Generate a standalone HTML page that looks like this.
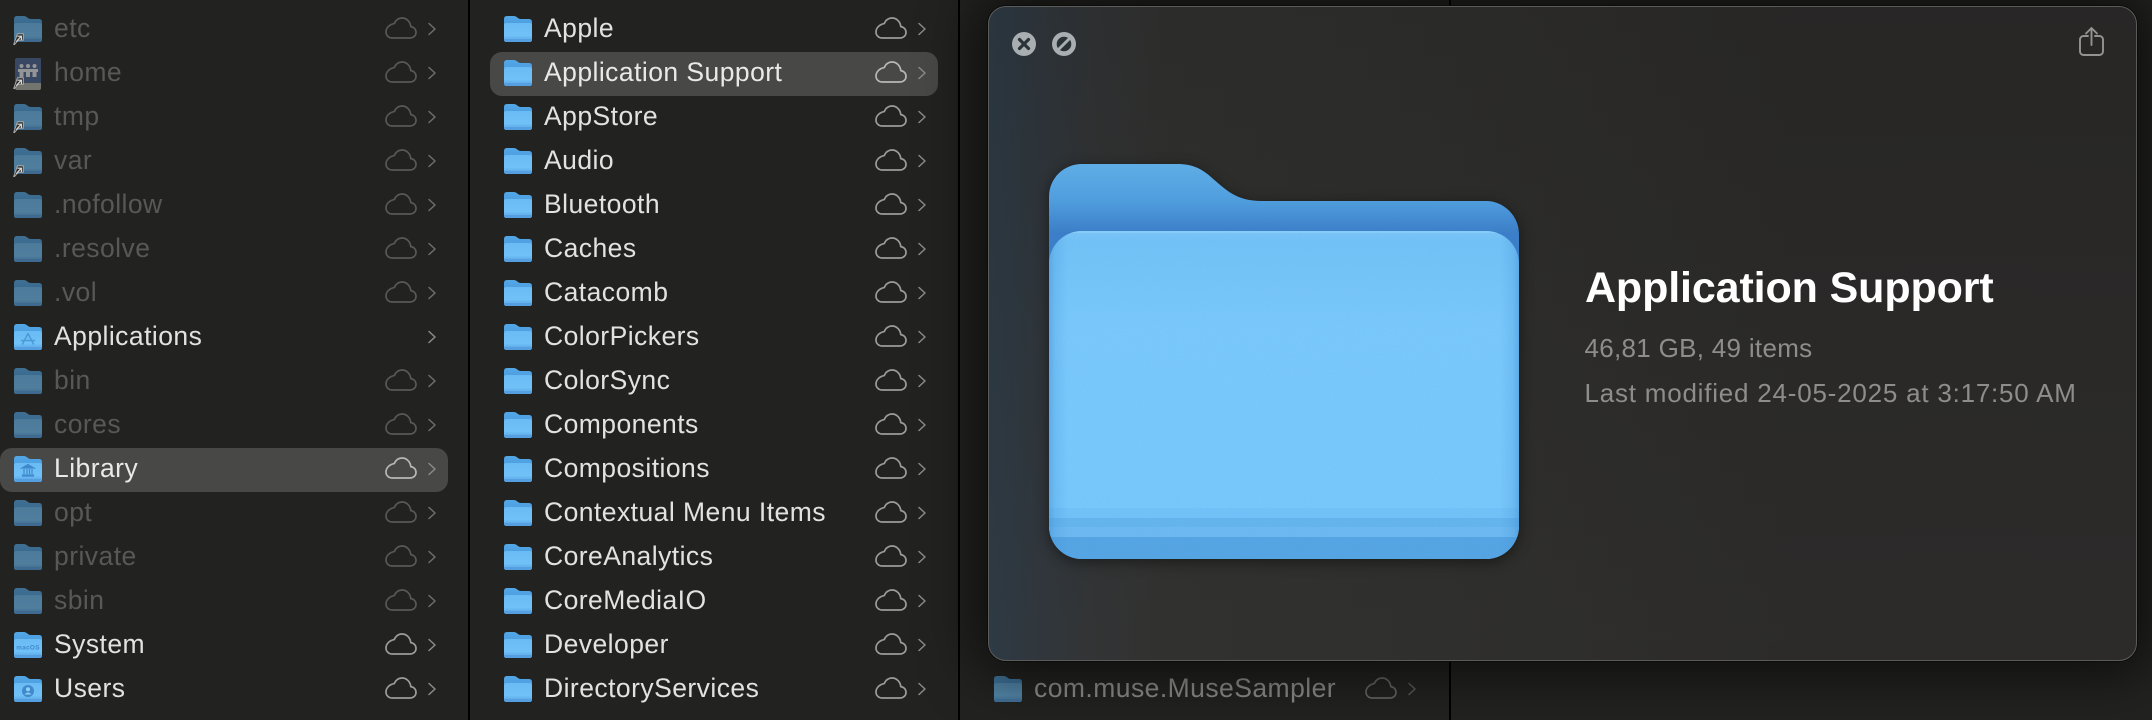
<!DOCTYPE html>
<html><head><meta charset="utf-8"><title>Finder</title>
<style>
html,body{margin:0;padding:0;background:#222220;width:2152px;height:720px;overflow:hidden}
body{position:relative;font-family:"Liberation Sans",sans-serif}
.d{position:absolute;top:0;width:2px;height:720px;background:#000}
.c{position:absolute;top:0;width:448px;height:720px}
.r{position:absolute;left:0;width:448px;height:44px;font-size:26.5px;line-height:44px;letter-spacing:.45px;color:#e2e2e1;white-space:nowrap}
.r.h{background:#484847;border-radius:12px;color:#e9e9e8}
.r span{position:absolute;left:54px;top:-1.9px}
.r svg{position:absolute;overflow:visible}
.r .i{left:14px;top:8px}
.r .cl{left:385px;top:9px;color:#9c9c9b}
.r .ch{left:428px;top:14px;color:#8a8a89}
.r.h .cl{color:#b8b8b7}
.r.x{color:#585857}
.r.x .i{opacity:.58}
.r.x .cl{color:#585857}
.r.x .ch{color:#6e6e6d}
.r.m{color:#8a8a89}
.r.m .i{opacity:.62}
.r.m .cl{color:#636362}
.r.m .ch{color:#5a5a59}
#p{position:absolute;left:988px;top:6px;width:1149px;height:655px;box-sizing:border-box;border:1.5px solid #5c5c5b;border-radius:18px;background:linear-gradient(180deg,rgba(0,0,0,.04),rgba(255,255,255,.015)),linear-gradient(90deg,#2b3741 0,#2d343a 4%,#2f3132 9%,#2e2e2c 16%,#2c2c2a 40%,#292827 70%);box-shadow:0 0 0 1px #0c0c0c,0 0 55px 12px rgba(0,0,0,.62)}
.t{position:absolute;white-space:nowrap}
</style></head><body>
<svg width="0" height="0" style="position:absolute">
<defs>
<linearGradient id="b" x1="0" y1="0" x2="0" y2="1"><stop offset="0" stop-color="#54a8e6"/><stop offset="1" stop-color="#3f8bd4"/></linearGradient>
<linearGradient id="fr" x1="0" y1="0" x2="0" y2="1"><stop offset="0" stop-color="#6abbf4"/><stop offset="1" stop-color="#74c4fa"/></linearGradient>
<linearGradient id="bb" gradientUnits="userSpaceOnUse" x1="0" y1="0" x2="0" y2="68"><stop offset="0" stop-color="#5fade6"/><stop offset=".55" stop-color="#4f9ddd"/><stop offset="1" stop-color="#3c7fc8"/></linearGradient>
<linearGradient id="ff" x1="0" y1="0" x2="0" y2="1"><stop offset="0" stop-color="#7cc6f8"/><stop offset=".03" stop-color="#72c2f7"/><stop offset=".3" stop-color="#7ac9fc"/><stop offset="1" stop-color="#78c8fc"/></linearGradient>
<linearGradient id="se" x1="0" y1="0" x2="1" y2="0"><stop offset="0" stop-color="#3f8fd6" stop-opacity=".5"/><stop offset=".012" stop-color="#3f8fd6" stop-opacity=".22"/><stop offset=".04" stop-color="#3f8fd6" stop-opacity="0"/><stop offset=".96" stop-color="#3f8fd6" stop-opacity="0"/><stop offset=".988" stop-color="#3f8fd6" stop-opacity=".22"/><stop offset="1" stop-color="#3f8fd6" stop-opacity=".5"/></linearGradient>
<clipPath id="fc"><rect x="0" y="67" width="470" height="328" rx="33"/></clipPath>
<filter id="n" x="0" y="0" width="100%" height="100%"><feTurbulence type="fractalNoise" baseFrequency=".7" numOctaves="2" seed="4"/><feColorMatrix values="0 0 0 0 .15 0 0 0 0 .35 0 0 0 0 .6 .6 0 0 0 -.18"/></filter>
<symbol id="f" viewBox="0 0 28 26" width="28" height="26">
<path d="M0 3Q0 0 3 0H9.500Q11.500 0 13 1.200L14.500 2.400Q15.500 3 17 3H25Q28 3 28 6V23Q28 26 25 26H3Q0 26 0 23Z" fill="url(#b)"/>
<path d="M0 9.500Q0 7 2.500 7H25.500Q28 7 28 9.500V23.500Q28 26 25.500 26H2.500Q0 26 0 23.500Z" fill="url(#fr)"/>
<path d="M0 20.500H28V22H0Z" fill="#66b6f0"/><path d="M0 22.500H28V23.500Q28 26 25.500 26H2.500Q0 26 0 23.500Z" fill="#559fe0"/>
</symbol>
<symbol id="cl" viewBox="0 0 32 22" width="32" height="22" overflow="visible">
<path d="M7.500 21H24.800C28.600 21 31 18.600 31 15.400C31 12.200 28.800 10 25.800 9.600C25.200 4.600 21.600 1 17 1C13.400 1 10.800 3 9.200 6.600C4.800 7.400 1 10.600 1 15C1 18.600 3.800 21 7.500 21Z" fill="none" stroke="currentColor" stroke-width="1.700" stroke-linejoin="round"/>
</symbol>
<symbol id="ch" viewBox="0 0 8 14" width="8" height="14" overflow="visible">
<path d="M1 1.500L7 7L1 12.500" fill="none" stroke="currentColor" stroke-width="1.500" stroke-linecap="round" stroke-linejoin="round"/>
</symbol>
<symbol id="ln" viewBox="0 0 11 12" width="11" height="12" overflow="visible">
<path d="M4.500 .8H10.300V7.200H5.200L1.500 11.500H.7Z" fill="#2c2c2b" stroke="#a8a8a7" stroke-width="1" stroke-linejoin="round"/>
<path d="M3.300 8.600L7.800 3.700M4.400 3.200H8.400V7" fill="none" stroke="#d8d8d7" stroke-width="1.200"/>
</symbol>
</defs>
</svg>

<div class="d" style="left:468px"></div>
<div class="d" style="left:958px"></div>
<div class="d" style="left:1449px"></div>

<div class="c" style="left:0">
<div class="r x" style="top:8px"><svg class="i" width="28" height="26"><use href="#f"/></svg><svg class="i" style="left:13px;top:25px;opacity:1" width="11" height="12"><use href="#ln"/></svg><span>etc</span><svg class="cl" width="32" height="22"><use href="#cl"/></svg><svg class="ch" width="8" height="14"><use href="#ch"/></svg></div>
<div class="r x" style="top:52px"><svg class="i" width="28" height="32" style="top:6px"><path d="M3 0H26Q27 0 27 1V26H1V2Q1 0 3 0Z" fill="#4a6493"/><path d="M1 25H27V30Q27 32 25 32H3Q1 32 1 30Z" fill="#b0b0a8"/><g fill="#e4e6ea"><circle cx="7.500" cy="8" r="2"/><circle cx="14" cy="8" r="2"/><circle cx="20.500" cy="8" r="2"/><path d="M4 11H24V14H22.500V19H18.500V14H16V19H12V14H9.500V19H5.500V14H4Z"/></g></svg><svg class="i" style="left:13px;top:25px;opacity:1" width="11" height="12"><use href="#ln"/></svg><span>home</span><svg class="cl" width="32" height="22"><use href="#cl"/></svg><svg class="ch" width="8" height="14"><use href="#ch"/></svg></div>
<div class="r x" style="top:96px"><svg class="i" width="28" height="26"><use href="#f"/></svg><svg class="i" style="left:13px;top:25px;opacity:1" width="11" height="12"><use href="#ln"/></svg><span>tmp</span><svg class="cl" width="32" height="22"><use href="#cl"/></svg><svg class="ch" width="8" height="14"><use href="#ch"/></svg></div>
<div class="r x" style="top:140px"><svg class="i" width="28" height="26"><use href="#f"/></svg><svg class="i" style="left:13px;top:25px;opacity:1" width="11" height="12"><use href="#ln"/></svg><span>var</span><svg class="cl" width="32" height="22"><use href="#cl"/></svg><svg class="ch" width="8" height="14"><use href="#ch"/></svg></div>
<div class="r x" style="top:184px"><svg class="i" width="28" height="26"><use href="#f"/></svg><span>.nofollow</span><svg class="cl" width="32" height="22"><use href="#cl"/></svg><svg class="ch" width="8" height="14"><use href="#ch"/></svg></div>
<div class="r x" style="top:228px"><svg class="i" width="28" height="26"><use href="#f"/></svg><span>.resolve</span><svg class="cl" width="32" height="22"><use href="#cl"/></svg><svg class="ch" width="8" height="14"><use href="#ch"/></svg></div>
<div class="r x" style="top:272px"><svg class="i" width="28" height="26"><use href="#f"/></svg><span>.vol</span><svg class="cl" width="32" height="22"><use href="#cl"/></svg><svg class="ch" width="8" height="14"><use href="#ch"/></svg></div>
<div class="r" style="top:316px"><svg class="i" width="28" height="26"><use href="#f"/><path d="M14 9.500L8.500 20M14 9.500L19.500 20M7.500 16.500H20.500" fill="none" stroke="#4b9ad9" stroke-width="1.500" stroke-linecap="round"/></svg><span>Applications</span><svg class="ch" width="8" height="14"><use href="#ch"/></svg></div>
<div class="r x" style="top:360px"><svg class="i" width="28" height="26"><use href="#f"/></svg><span>bin</span><svg class="cl" width="32" height="22"><use href="#cl"/></svg><svg class="ch" width="8" height="14"><use href="#ch"/></svg></div>
<div class="r x" style="top:404px"><svg class="i" width="28" height="26"><use href="#f"/></svg><span>cores</span><svg class="cl" width="32" height="22"><use href="#cl"/></svg><svg class="ch" width="8" height="14"><use href="#ch"/></svg></div>
<div class="r h" style="top:448px"><svg class="i" width="28" height="26"><use href="#f"/><path d="M14 8.500L20 12H8ZM8.500 19H19.500V20H8.500ZM10 13V18M13 13V18M15.500 13V18M18 13V18" fill="#4089cd" stroke="#4089cd" stroke-width="1.200"/></svg><span>Library</span><svg class="cl" width="32" height="22"><use href="#cl"/></svg><svg class="ch" width="8" height="14"><use href="#ch"/></svg></div>
<div class="r x" style="top:492px"><svg class="i" width="28" height="26"><use href="#f"/></svg><span>opt</span><svg class="cl" width="32" height="22"><use href="#cl"/></svg><svg class="ch" width="8" height="14"><use href="#ch"/></svg></div>
<div class="r x" style="top:536px"><svg class="i" width="28" height="26"><use href="#f"/></svg><span>private</span><svg class="cl" width="32" height="22"><use href="#cl"/></svg><svg class="ch" width="8" height="14"><use href="#ch"/></svg></div>
<div class="r x" style="top:580px"><svg class="i" width="28" height="26"><use href="#f"/></svg><span>sbin</span><svg class="cl" width="32" height="22"><use href="#cl"/></svg><svg class="ch" width="8" height="14"><use href="#ch"/></svg></div>
<div class="r" style="top:624px"><svg class="i" width="28" height="26"><use href="#f"/><text x="14" y="17.500" font-size="6.400" font-weight="700" text-anchor="middle" fill="#4089cd" font-family="Liberation Sans" letter-spacing=".3">macOS</text></svg><span>System</span><svg class="cl" width="32" height="22"><use href="#cl"/></svg><svg class="ch" width="8" height="14"><use href="#ch"/></svg></div>
<div class="r" style="top:668px"><svg class="i" width="28" height="26"><use href="#f"/><circle cx="14" cy="15" r="6" fill="#4089cd"/><circle cx="14" cy="13.300" r="2" fill="#8fd0f8"/><path d="M10.500 18.500Q14 14.500 17.500 18.500Z" fill="#8fd0f8"/></svg><span>Users</span><svg class="cl" width="32" height="22"><use href="#cl"/></svg><svg class="ch" width="8" height="14"><use href="#ch"/></svg></div>
</div>

<div class="c" style="left:490px">
<div class="r" style="top:8px"><svg class="i" width="28" height="26"><use href="#f"/></svg><span>Apple</span><svg class="cl" width="32" height="22"><use href="#cl"/></svg><svg class="ch" width="8" height="14"><use href="#ch"/></svg></div>
<div class="r h" style="top:52px"><svg class="i" width="28" height="26"><use href="#f"/></svg><span>Application Support</span><svg class="cl" width="32" height="22"><use href="#cl"/></svg><svg class="ch" width="8" height="14"><use href="#ch"/></svg></div>
<div class="r" style="top:96px"><svg class="i" width="28" height="26"><use href="#f"/></svg><span>AppStore</span><svg class="cl" width="32" height="22"><use href="#cl"/></svg><svg class="ch" width="8" height="14"><use href="#ch"/></svg></div>
<div class="r" style="top:140px"><svg class="i" width="28" height="26"><use href="#f"/></svg><span>Audio</span><svg class="cl" width="32" height="22"><use href="#cl"/></svg><svg class="ch" width="8" height="14"><use href="#ch"/></svg></div>
<div class="r" style="top:184px"><svg class="i" width="28" height="26"><use href="#f"/></svg><span>Bluetooth</span><svg class="cl" width="32" height="22"><use href="#cl"/></svg><svg class="ch" width="8" height="14"><use href="#ch"/></svg></div>
<div class="r" style="top:228px"><svg class="i" width="28" height="26"><use href="#f"/></svg><span>Caches</span><svg class="cl" width="32" height="22"><use href="#cl"/></svg><svg class="ch" width="8" height="14"><use href="#ch"/></svg></div>
<div class="r" style="top:272px"><svg class="i" width="28" height="26"><use href="#f"/></svg><span>Catacomb</span><svg class="cl" width="32" height="22"><use href="#cl"/></svg><svg class="ch" width="8" height="14"><use href="#ch"/></svg></div>
<div class="r" style="top:316px"><svg class="i" width="28" height="26"><use href="#f"/></svg><span>ColorPickers</span><svg class="cl" width="32" height="22"><use href="#cl"/></svg><svg class="ch" width="8" height="14"><use href="#ch"/></svg></div>
<div class="r" style="top:360px"><svg class="i" width="28" height="26"><use href="#f"/></svg><span>ColorSync</span><svg class="cl" width="32" height="22"><use href="#cl"/></svg><svg class="ch" width="8" height="14"><use href="#ch"/></svg></div>
<div class="r" style="top:404px"><svg class="i" width="28" height="26"><use href="#f"/></svg><span>Components</span><svg class="cl" width="32" height="22"><use href="#cl"/></svg><svg class="ch" width="8" height="14"><use href="#ch"/></svg></div>
<div class="r" style="top:448px"><svg class="i" width="28" height="26"><use href="#f"/></svg><span>Compositions</span><svg class="cl" width="32" height="22"><use href="#cl"/></svg><svg class="ch" width="8" height="14"><use href="#ch"/></svg></div>
<div class="r" style="top:492px"><svg class="i" width="28" height="26"><use href="#f"/></svg><span>Contextual Menu Items</span><svg class="cl" width="32" height="22"><use href="#cl"/></svg><svg class="ch" width="8" height="14"><use href="#ch"/></svg></div>
<div class="r" style="top:536px"><svg class="i" width="28" height="26"><use href="#f"/></svg><span>CoreAnalytics</span><svg class="cl" width="32" height="22"><use href="#cl"/></svg><svg class="ch" width="8" height="14"><use href="#ch"/></svg></div>
<div class="r" style="top:580px"><svg class="i" width="28" height="26"><use href="#f"/></svg><span>CoreMediaIO</span><svg class="cl" width="32" height="22"><use href="#cl"/></svg><svg class="ch" width="8" height="14"><use href="#ch"/></svg></div>
<div class="r" style="top:624px"><svg class="i" width="28" height="26"><use href="#f"/></svg><span>Developer</span><svg class="cl" width="32" height="22"><use href="#cl"/></svg><svg class="ch" width="8" height="14"><use href="#ch"/></svg></div>
<div class="r" style="top:668px"><svg class="i" width="28" height="26"><use href="#f"/></svg><span>DirectoryServices</span><svg class="cl" width="32" height="22"><use href="#cl"/></svg><svg class="ch" width="8" height="14"><use href="#ch"/></svg></div>
</div>

<div class="c" style="left:980px">
<div class="r m" style="top:668px"><svg class="i" width="28" height="26"><use href="#f"/></svg><span>com.muse.MuseSampler</span><svg class="cl" width="32" height="22"><use href="#cl"/></svg><svg class="ch" width="8" height="14"><use href="#ch"/></svg></div>
</div>

<div id="p"></div>

<svg style="position:absolute;left:0;top:0" width="2152" height="720">
<circle cx="1024" cy="44" r="12" fill="#a9aeb0"/>
<path d="M1019.500 39.500L1028.500 48.500M1028.500 39.500L1019.500 48.500" stroke="#2b3339" stroke-width="3.200" stroke-linecap="round"/>
<circle cx="1064" cy="44" r="12" fill="#a9aeb0"/>
<circle cx="1064" cy="44" r="7.300" fill="#2b3236"/>
<path d="M1058 50L1070 38" stroke="#a9aeb0" stroke-width="3"/>
<path d="M2088 36H2083.500a3.500 3.500 0 0 0-3.500 3.500V51.500a3.500 3.500 0 0 0 3.500 3.500H2099.500a3.500 3.500 0 0 0 3.500-3.500V39.500a3.500 3.500 0 0 0-3.500-3.500H2095M2091.500 45V28.500M2086 33.500L2091.500 28L2097 33.500" fill="none" stroke="#939392" stroke-width="1.900" stroke-linecap="round" stroke-linejoin="round"/>
<g transform="translate(1049 164)" style="filter:drop-shadow(0 3px 7px rgba(0,0,0,.45))">
<path d="M0 33C0 14 15 0 33 0H128C144 0 153 5 162 13C178 27 188 37 213 37H437C455 37 470 52 470 70V300H0Z" fill="url(#bb)"/>
<g clip-path="url(#fc)">
<rect x="0" y="67" width="470" height="328" fill="url(#ff)"/>
<rect x="0" y="67" width="470" height="2" fill="#8fd2fa" opacity=".7"/>
<rect x="0" y="344" width="470" height="10" fill="#72c2f8"/>
<rect x="0" y="354" width="470" height="9" fill="#65b5ee"/>
<rect x="0" y="363" width="470" height="10" fill="#6db9f1"/>
<rect x="0" y="373" width="470" height="22" fill="#55a5e4"/>
<rect x="0" y="67" width="470" height="328" fill="url(#se)"/>
<rect x="0" y="67" width="470" height="328" filter="url(#n)" opacity=".25"/>
</g>
</g>
</svg>

<div class="t" style="left:1585px;top:264px;font-size:43px;font-weight:700;color:#fff;letter-spacing:-.12px;line-height:48px">Application Support</div>
<div class="t" style="left:1584.500px;top:333px;font-size:26px;color:#8e8d8b;letter-spacing:.3px;line-height:30px">46,81 GB, 49 items</div>
<div class="t" style="left:1584.500px;top:378px;font-size:26px;color:#8e8d8b;letter-spacing:.78px;line-height:30px">Last modified 24-05-2025 at 3:17:50 AM</div>
</body></html>
